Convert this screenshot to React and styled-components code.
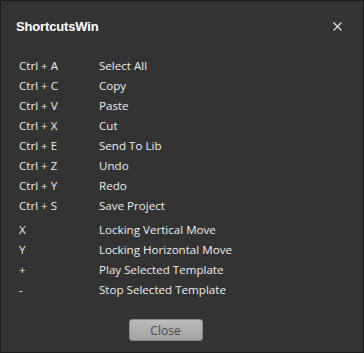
import styled, { createGlobalStyle } from "styled-components";

const GlobalStyle = createGlobalStyle`
    html, body {
        margin: 0;
        padding: 0;
        background: #333333;
    }
`;

const Window = styled.div`
    box-sizing: border-box;
    width: 364px;
    height: 353px;
    background: #333333;
    border: 1px solid #1c1c1c;
    display: flex;
    flex-direction: column;
    font-family: "Open Sans", "Noto Sans", sans-serif;
    color: #f0f0f0;
`;

const Header = styled.div`
    display: flex;
    align-items: center;
    justify-content: space-between;
    height: 51px;
    padding: 0 21px 0 15px;
`;

const Title = styled.h1`
    margin: 0;
    font-family: "Liberation Sans", Arial, sans-serif;
    font-size: 13px;
    font-weight: 700;
    letter-spacing: -0.15px;
    color: #ffffff;
`;

const CloseX = styled.button`
    background: none;
    border: none;
    padding: 0;
    width: 9px;
    height: 9px;
    color: #e0e0e0;
    cursor: pointer;
    display: flex;

    > svg {
        width: 9px;
        height: 9px;
    }
`;

const List = styled.div`
    display: flex;
    flex-direction: column;
    padding: 3px 0 0 18px;
`;

const Group = styled.div`
    display: flex;
    flex-direction: column;
    margin-bottom: ${({ gap }) => gap || 0}px;
`;

const Row = styled.div`
    display: grid;
    grid-template-columns: 80px 1fr;
    height: 20px;
    align-items: center;
    font-size: 11.6px;
    color: #ececec;
`;

const Footer = styled.div`
    margin-top: auto;
    display: flex;
    justify-content: center;
    padding: 0 33px 11px 0;
`;

const Button = styled.button`
    width: 74px;
    height: 22px;
    border: 1px solid #8a8a8a;
    border-radius: 3px;
    background: linear-gradient(#bdbdbd, #a0a0a0);
    color: #4a4a4a;
    font-family: "Open Sans", "Noto Sans", sans-serif;
    font-size: 12px;
    padding: 0;
    cursor: pointer;
`;

const ctrlKeys = [
    ["Ctrl + A", "Select All"],
    ["Ctrl + C", "Copy"],
    ["Ctrl + V", "Paste"],
    ["Ctrl + X", "Cut"],
    ["Ctrl + E", "Send To Lib"],
    ["Ctrl + Z", "Undo"],
    ["Ctrl + Y", "Redo"],
    ["Ctrl + S", "Save Project"],
];

const otherKeys = [
    ["X", "Locking Vertical Move"],
    ["Y", "Locking Horizontal Move"],
    ["+", "Play Selected Template"],
    ["-", "Stop Selected Template"],
];

export default function App() {
    return (
        <>
            <GlobalStyle />
            <Window>
                <Header>
                    <Title>ShortcutsWin</Title>
                    <CloseX aria-label="close">
                        <svg viewBox="0 0 9 9">
                            <path
                                d="M0.5 0.5 L8.5 8.5 M8.5 0.5 L0.5 8.5"
                                stroke="currentColor"
                                strokeWidth="1.3"
                            />
                        </svg>
                    </CloseX>
                </Header>
                <List>
                    <Group gap={4}>
                        {ctrlKeys.map(([key, label]) => (
                            <Row key={key}>
                                <span>{key}</span>
                                <span>{label}</span>
                            </Row>
                        ))}
                    </Group>
                    <Group>
                        {otherKeys.map(([key, label]) => (
                            <Row key={key}>
                                <span>{key}</span>
                                <span>{label}</span>
                            </Row>
                        ))}
                    </Group>
                </List>
                <Footer>
                    <Button>Close</Button>
                </Footer>
            </Window>
        </>
    );
}
